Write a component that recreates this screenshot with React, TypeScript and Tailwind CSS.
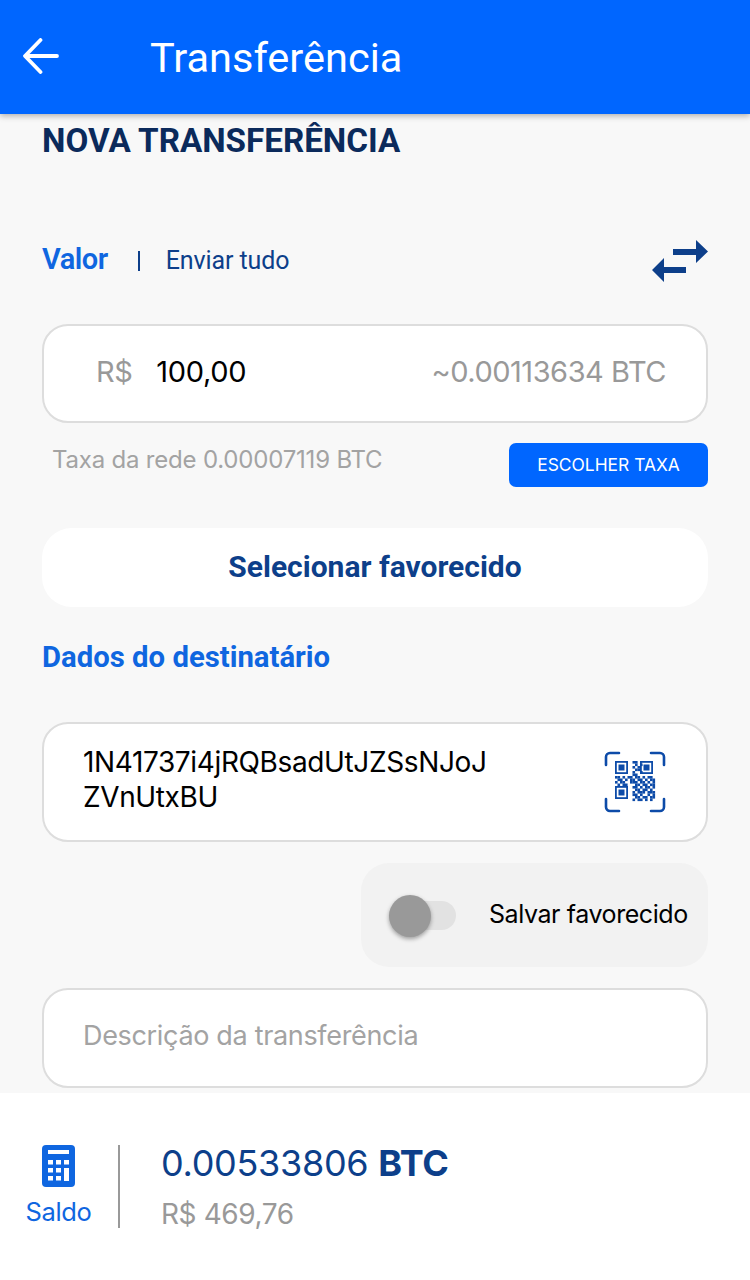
import React from "react";

function SwapIcon() {
  return (
    <svg width="56" height="42" viewBox="0 0 56 42" className="block" fill="#0d3f8a">
      <path d="M21 9h23V0l12 11.5L44 23v-8H21z" />
      <path d="M34 33H12v9L0 30l12-12v9h22z" />
    </svg>
  );
}

function QrIcon() {
  const rows = [
    "0000000110000000",
    "0000000010100000",
    "0000000101000000",
    "0000000011000000",
    "0000000100100000",
    "0000000110000000",
    "1101011011010110",
    "0110101101101011",
    "1011001110110101",
    "0101100011011011",
    "0000000110101101",
    "0000000011011010",
    "0000000101110111",
    "0000000110100101",
    "0000000011011011",
    "0000000101101010",
  ];
  const finders: [number, number][] = [[11, 10], [36, 10], [11, 35]];
  return (
    <svg width="62" height="62" viewBox="0 0 62 62" fill="none" className="block">
      <path d="M2 14V6a4 4 0 0 1 4-4h9M47 2h9a4 4 0 0 1 4 4v8M60 48v8a4 4 0 0 1-4 4h-9M15 60H6a4 4 0 0 1-4-4v-8" stroke="#0d4ba8" strokeWidth="2.6" strokeLinecap="round" />
      {rows.map((r, y) =>
        r.split("").map((c, x) =>
          c === "1" ? <rect key={`${x}-${y}`} x={11 + x * 2.5} y={10 + y * 2.5} width="2.6" height="2.6" fill="#0d4ba8" /> : null
        )
      )}
      {finders.map(([x, y]) => (
        <g key={`${x}-${y}`}>
          <rect x={x + 0.9} y={y + 0.9} width="11.2" height="11.2" stroke="#0d4ba8" strokeWidth="1.8" />
          <rect x={x + 3.5} y={y + 3.5} width="6" height="6" fill="#0d4ba8" />
        </g>
      ))}
    </svg>
  );
}

function CalcIcon() {
  const cells: [number, number][] = [
    [6, 15], [14, 15], [22, 15],
    [6, 23], [14, 23],
    [6, 31], [14, 31],
  ];
  return (
    <svg width="33" height="42" viewBox="0 0 33 42" className="block">
      <rect width="33" height="42" rx="4" fill="#0f66e0" />
      <rect x="6" y="5" width="21" height="4" fill="#fff" />
      {cells.map(([x, y]) => (
        <rect key={`${x}${y}`} x={x} y={y} width="5" height="4.5" fill="#fff" />
      ))}
      <rect x="22" y="23" width="5" height="13" fill="#fff" />
    </svg>
  );
}

export default function App() {
  return (
    <div className="w-[750px] h-[1280px] overflow-hidden bg-[#f8f8f8] flex flex-col font-['Inter','Liberation_Sans',sans-serif]">
      <header className="h-[114px] shrink-0 bg-[#0066ff] flex items-center pl-[23px] shadow-[0_2px_6px_rgba(0,0,0,0.3)] relative z-10">
        <svg width="36" height="36" viewBox="0 0 36 36" fill="none" stroke="#fff" strokeWidth="3.8" strokeLinecap="round" strokeLinejoin="round" className="block -mt-[3px]">
          <path d="M34 18H3M17.5 2 2 18 17.5 34" />
        </svg>
        <h1 className="ml-[91px] mt-[1px] text-[41.5px] leading-none text-white font-['Roboto',sans-serif] font-normal">Transferência</h1>
      </header>

      <main className="flex-1 px-[42px] flex flex-col">
        <h2 className="mt-[9px] h-[36px] leading-[36px] text-[33.2px] font-bold text-[#0b2a5b] font-['Roboto',sans-serif]">NOVA TRANSFERÊNCIA</h2>

        <div className="mt-[81px] h-[42px] flex items-center">
          <span className="text-[29px] -mt-[2px] font-semibold tracking-[-0.5px] text-[#0f66e0] font-['Roboto',sans-serif]">Valor</span>
          <span className="ml-[30px] w-[2px] h-[20px] bg-[#0d3f8a]" />
          <span className="ml-[26px] text-[25px] text-[#0d3f8a] tracking-[-0.1px] font-['Roboto',sans-serif]">Enviar tudo</span>
          <span className="ml-auto"><SwapIcon /></span>
        </div>

        <div className="mt-[42px] h-[99px] bg-white border-2 border-[#dddddd] rounded-[26px] flex items-center px-[40px] pb-[4px] justify-between text-[29px]">
          <div className="flex items-center">
            <span className="text-[#999999] ml-[12px] tracking-[-0.5px]">R$</span>
            <span className="ml-[24px] text-black tracking-[-0.3px]">100,00</span>
          </div>
          <span className="text-[#999999] tracking-[-0.47px]">~0.00113634 BTC</span>
        </div>

        <div className="mt-[20px] h-[44px] flex items-start justify-between">
          <span className="ml-[10px] mt-[3px] text-[24px] leading-[28px] text-[#a3a3a3] tracking-[-0.2px]">Taxa da rede 0.00007119 BTC</span>
          <button className="w-[199px] h-[44px] bg-[#0066ff] rounded-[7px] text-white text-[17.4px] pt-[1px]">ESCOLHER TAXA</button>
        </div>

        <button className="mt-[41px] h-[79px] shrink-0 bg-white rounded-[30px] pb-[2px] text-[30px] font-bold text-[#0d3f8a] font-['Roboto',sans-serif]">Selecionar favorecido</button>

        <h3 className="mt-[32px] h-[36px] leading-[36px] text-[29.3px] font-bold text-[#0f66e0] font-['Roboto',sans-serif]">Dados do destinatário</h3>

        <div className="mt-[47px] h-[120px] shrink-0 bg-white border-2 border-[#dddddd] rounded-[26px] flex items-center justify-between pl-[39px] pr-[40px]">
          <div className="text-[28px] leading-[35px] -mt-[5px] text-black tracking-[-0.37px] w-[420px] break-all">1N41737i4jRQBsadUtJZSsNJoJ<br />ZVnUtxBU</div>
          <QrIcon />
        </div>

        <div className="mt-[21px] self-end w-[347px] h-[104px] shrink-0 bg-[#f2f2f2] rounded-[28px] flex items-center">
          <div className="relative ml-[28px] w-[67px] h-[29px] bg-[#e2e2e2] rounded-full">
            <span className="absolute left-0 top-[-6px] w-[42px] h-[42px] rounded-full bg-[#999999] shadow-[0_2px_4px_rgba(0,0,0,0.35)]" />
          </div>
          <span className="ml-[33px] text-[25px] tracking-[-0.42px] text-black">Salvar favorecido</span>
        </div>

        <div className="mt-[21px] h-[100px] shrink-0 bg-white border-2 border-[#dddddd] rounded-[26px] flex items-center pl-[39px] pb-[4px] text-[27px] text-[#a3a3a3] tracking-[-0.33px]">Descrição da transferência</div>
      </main>

      <footer className="h-[187px] shrink-0 bg-white flex items-start pt-[52px]">
        <div className="w-[117px] flex flex-col items-center">
          <CalcIcon />
          <span className="mt-[9px] text-[25.5px] leading-[32px] tracking-[-0.4px] text-[#0f66e0]">Saldo</span>
        </div>
        <div className="ml-[1px] w-[2px] h-[83px] bg-[#999999]" />
        <div className="ml-[41px] flex flex-col">
          <div className="text-[36px] leading-[40px] text-[#0d3f8a] tracking-[-0.3px] -mt-[2px]">0.00533806 <span className="font-bold text-[#0d3f8a]">BTC</span></div>
          <div className="mt-[14px] text-[28px] leading-[34px] text-[#999999] tracking-[-0.4px]">R$ 469,76</div>
        </div>
      </footer>
    </div>
  );
}
